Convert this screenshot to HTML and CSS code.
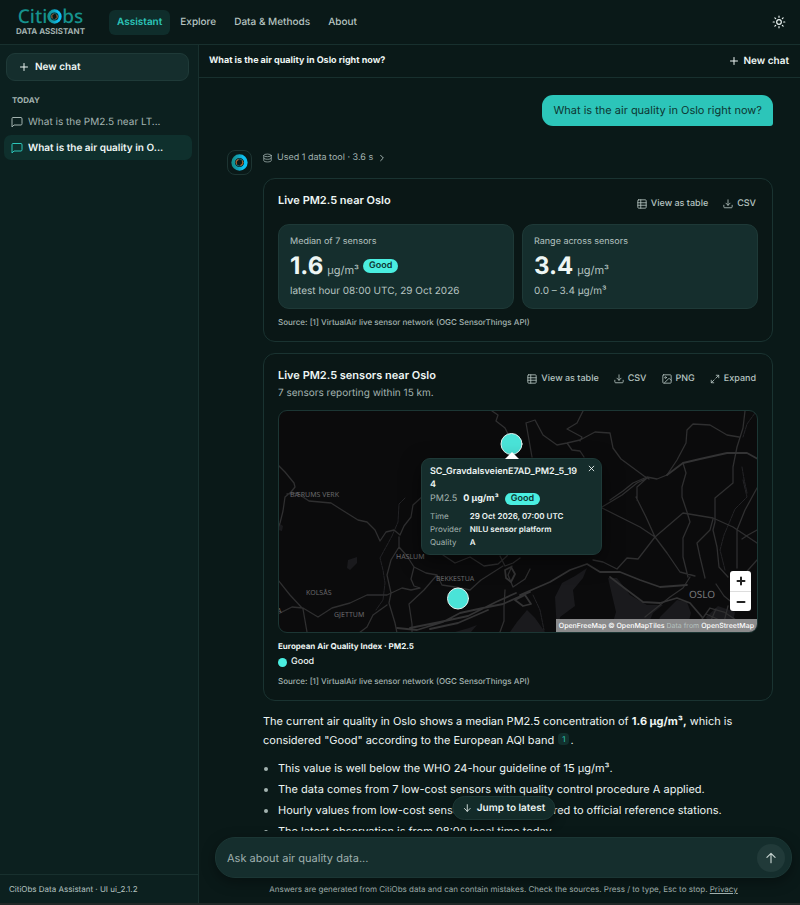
FILE: index.html
```html
<!DOCTYPE html>
<html lang="en">
<head>
<meta charset="utf-8">
<meta name="viewport" content="width=device-width, initial-scale=1">
<title>CitiObs Data Assistant</title>
<link rel="stylesheet" href="styles.css">
</head>
<body>
<svg class="defs" aria-hidden="true">
  <linearGradient id="ring" x1="0" y1="0" x2="1" y2="0"><stop offset="0" stop-color="#12908f"/><stop offset=".45" stop-color="#12a4bd"/><stop offset=".8" stop-color="#0cc0f2"/></linearGradient>
  <symbol id="i-ring" viewBox="0 0 24 24"><circle cx="12" cy="12" r="9" fill="#0c1715" stroke="url(#ring)" stroke-width="5"/><circle cx="12" cy="12" r="5" fill="none" stroke="#1d6b70" stroke-width="1.4"/><path d="M8 14a4.500 4.500 0 0 1 2-6M14 16a4.500 4.500 0 0 0 2-6" fill="none" stroke="#b35a26" stroke-width="1.500"/></symbol>
  <symbol id="i-plus" viewBox="0 0 24 24"><path d="M5 12h14M12 5v14"/></symbol>
  <symbol id="i-chat" viewBox="0 0 24 24"><path d="M22 16a2 2 0 0 1-2 2H6l-4 4V5a2 2 0 0 1 2-2h16a2 2 0 0 1 2 2z"/></symbol>
  <symbol id="i-sun" viewBox="0 0 24 24"><circle cx="12" cy="12" r="4"/><path d="M12 2v2M12 20v2M4.900 4.900l1.400 1.400M17.700 17.700l1.400 1.400M2 12h2M20 12h2M6.300 17.700l-1.400 1.400M19.100 4.900l-1.400 1.400"/></symbol>
  <symbol id="i-db" viewBox="0 0 24 24"><ellipse cx="12" cy="5" rx="10" ry="3.500"/><path d="M2 5v14c0 2 4.500 3.500 10 3.500s10-1.500 10-3.500V5M2 12c0 2 4.500 3.500 10 3.500s10-1.500 10-3.500"/></symbol>
  <symbol id="i-right" viewBox="0 0 24 24"><path d="m8 4 8 8-8 8"/></symbol>
  <symbol id="i-table" viewBox="0 0 24 24"><rect x="2" y="2" width="20" height="20" rx="2"/><path d="M2 9h20M2 15h20M9 2v20"/></symbol>
  <symbol id="i-down" viewBox="0 0 24 24"><path d="M22 15v4a2 2 0 0 1-2 2H4a2 2 0 0 1-2-2v-4M7 10l5 5 5-5M12 15V2"/></symbol>
  <symbol id="i-image" viewBox="0 0 24 24"><rect x="2" y="2" width="20" height="20" rx="2"/><circle cx="8.500" cy="8.500" r="2"/><path d="m22 15-3.500-3.500a2 2 0 0 0-2.800 0L6 21"/></symbol>
  <symbol id="i-expand" viewBox="0 0 24 24"><path d="M15 3h6v6M9 21H3v-6M21 3l-7 7M3 21l7-7"/></symbol>
  <symbol id="i-arrow" viewBox="0 0 24 24"><path d="M12 20V4M5 11l7-7 7 7"/></symbol>
  <symbol id="i-arrow-down" viewBox="0 0 24 24"><path d="M12 4v16M5 13l7 7 7-7"/></symbol>
  <symbol id="i-close" viewBox="0 0 24 24"><path d="M4 4l16 16M20 4 4 20"/></symbol>
</svg>

<header class="topbar">
  <a class="brand" href="#" aria-label="CitiObs Data Assistant">
    <span class="brand-name">Citi<svg class="brand-ring"><use href="#i-ring"/></svg>bs</span>
    <span class="brand-sub">DATA ASSISTANT</span>
  </a>
  <nav class="nav">
    <a class="nav-link active" href="#">Assistant</a>
    <a class="nav-link" href="#">Explore</a>
    <a class="nav-link" href="#">Data &amp; Methods</a>
    <a class="nav-link" href="#">About</a>
  </nav>
  <button class="theme" aria-label="Toggle theme"><svg class="icon"><use href="#i-sun"/></svg></button>
</header>

<div class="layout">
  <aside class="sidebar">
    <button class="new-chat"><svg class="icon"><use href="#i-plus"/></svg>New chat</button>
    <h2 class="group">TODAY</h2>
    <a class="thread" href="#"><svg class="icon"><use href="#i-chat"/></svg>What is the PM2.5 near LT...</a>
    <a class="thread current" href="#"><svg class="icon"><use href="#i-chat"/></svg>What is the air quality in O...</a>
    <footer class="version">CitiObs Data Assistant · UI ui_2.1.2</footer>
  </aside>

  <main class="main">
    <div class="chat-head">
      <h1 class="chat-title">What is the air quality in Oslo right now?</h1>
      <button class="head-new"><svg class="icon"><use href="#i-plus"/></svg>New chat</button>
    </div>

    <div class="stream">
      <p class="bubble">What is the air quality in Oslo right now?</p>
      <div class="reply">
        <div class="avatar"><svg><use href="#i-ring"/></svg></div>
        <div class="answer">
          <button class="tool"><svg class="icon"><use href="#i-db"/></svg>Used 1 data tool · 3.6 s<svg class="chev"><use href="#i-right"/></svg></button>

          <section class="card">
            <div class="card-head">
              <h3 class="card-title">Live PM2.5 near Oslo</h3>
              <div class="actions">
                <button class="action"><svg class="icon"><use href="#i-table"/></svg>View as table</button>
                <button class="action"><svg class="icon"><use href="#i-down"/></svg>CSV</button>
              </div>
            </div>
            <div class="tiles">
              <div class="tile">
                <div class="tile-label">Median of 7 sensors</div>
                <div class="tile-value"><strong>1.6</strong><span class="unit">µg/m³</span><span class="badge">Good</span></div>
                <div class="tile-note">latest hour 08:00 UTC, 29 Oct 2026</div>
              </div>
              <div class="tile">
                <div class="tile-label">Range across sensors</div>
                <div class="tile-value"><strong>3.4</strong><span class="unit">µg/m³</span></div>
                <div class="tile-note">0.0 – 3.4 µg/m³</div>
              </div>
            </div>
            <p class="source">Source: [1] VirtualAir live sensor network (OGC SensorThings API)</p>
          </section>

          <section class="card">
            <div class="card-head">
              <div>
                <h3 class="card-title">Live PM2.5 sensors near Oslo</h3>
                <p class="card-sub">7 sensors reporting within 15 km.</p>
              </div>
              <div class="actions">
                <button class="action"><svg class="icon"><use href="#i-table"/></svg>View as table</button>
                <button class="action"><svg class="icon"><use href="#i-down"/></svg>CSV</button>
                <button class="action"><svg class="icon"><use href="#i-image"/></svg>PNG</button>
                <button class="action"><svg class="icon"><use href="#i-expand"/></svg>Expand</button>
              </div>
            </div>
            <div class="map">
              <svg class="map-canvas" viewBox="278 411 480 221" preserveAspectRatio="xMidYMid slice" role="img" aria-label="Sensor map of Oslo">
                <g class="water">
                  <path d="M557 632L555 597 562 583 575 576 587 568 583 578 573 590 575 606 560 617 559 632z"/>
                  <path d="M608 578L617 578 630 595 647 605 663 605 653 613 645 632 610 632 616 612z"/>
                  <path d="M677 600L687 602 691 613 686 632 655 632 660 617z"/>
                  <path d="M510 632L517 622 527 610 535 618 545 632zM455 632l14-4 8-3-6 7z"/>
                  <path d="M348 560l9-3v6l-7 7-3-2zM279 523l4 3-1 5-4-1z"/>
                  <path d="M706 617l12-11 17 6-4 20h-20z"/>
                </g>
                <g class="streams">
                  <path d="M405 498l-6 6-1 18-6 14-12 22 3 12 2 13-2 17-7 10M743 480l4 17-12 12-5 12-6 14-4 15 5 20M755 413l-8 11-4 13M742 467l2 12 3 14M533 595l7 15 4 20"/>
                </g>
                <g class="roads">
                  <path d="M492 411l6 4-2 6 9 7 3 6M278 465l7 7 9 11 1 4-4 5-6 5-2 14-3 12-2 5M287 494l10-1 12 8 22 2 11 7 16 10 9 2 8 8 5 11 6-9 8-2 6 5 4-9 7-9 2-12 10-9 20-10"/>
                  <path d="M399 537v10l-8 13-4 15 4 18-2 10 6 20 2 10M399 547l8 9 7 11 12 6 11 2 5 10 13 2 15 3 11-10 22-14M414 567l-3 12 3 7 6 2-9 2-9-2-15 7h-20l-17 8-18 5-14 9-15-9-11-1-14 7M278 580l12 15 13 14 4 23M387 605l-14 10-6 12-8 6M437 575l-13 15-15 14 3 20v8"/>
                  <path d="M443 555l12 8 15-6 14 9 14-2 9-8 4-12M500 556l5 10 8-3 7-5M512 566l-4 9 5 12 12-8 5-10M505 590l-1 17 0 14-4 11"/>
                  <path d="M526 423l9-3 8 15 14 10 10-2 13-3 15-8 15 1 3 15 8 11 23 17 5 3M526 423l6 34M567 443l5 7 8 1 4 6M583 411l-6 12-10 6 15 8-2 4M610 500l13-9 10-8 14-6 10 2 10-4 10-15 9-17 1-13 6-6 17 1 17 10 12 2M745 411l-2 17-6 19-4 20v16l-18 15v24l-2 8 4 17 2 20 9 10"/>
                  <path d="M602 508l18 9 20 10 15 10 12 16 13 19 15 4M602 507l20-12 15-12 10-5M637 500v-13l10-9M636 497l10 20 9 20M683 463l3 10-4 14v10l5 15 3 10-7 16v19l5 20M713 519l-3 11-13 13 3 14 5 21"/>
                  <path d="M655 537l28-24 30 5 20 9 24 16M593 560l10 2 14 7 10-11 11 1 17-22M757 488l-12 22-8 20v38M757 530l-9 5-6 4M757 560l-16 18"/>
                  <path d="M690 577l-7 11-13 9-25 20M716 584l8 12 10 8M700 622l10-14 14 4 12 8M706 614l18 8M716 609l-8 18M728 606l-5 20"/>
                </g>
                <g class="roads major">
                  <path d="M520 595l30-13 20-12 17-6 13 8 20 0 20 8 20 7 27-2M610 577l17 13 16 12 17 1 17-5 13 5 12 14M667 475l16-12 17-4 27-6h20l11 6M397 628l20 2 26-8 17-9 23-5 20-4 27-12M410 628l30-6 28-6 28-14 20-9M430 629l28-6 30-13"/>
                  <path d="M505 570l6-3 4 7-4 8-5-4zM515 600l8 6 8-2-6-9z"/>
                </g>
                <g class="places">
                  <text x="290" y="497">BÆRUMS VERK</text>
                  <text x="396" y="559">HASLUM</text>
                  <text x="436" y="581">BEKKESTUA</text>
                  <text x="306" y="595">KOLSÅS</text>
                  <text x="334" y="617">GJETTUM</text>
                  <text x="277" y="613">A</text>
                  <text class="city" x="689" y="598">OSLO</text>
                </g>
                <g class="sensors"><circle cx="511.500" cy="444" r="10.500"/><circle cx="458" cy="598.500" r="10.500"/></g>
              </svg>
              <div class="popup">
                <button class="popup-close" aria-label="Close popup"><svg><use href="#i-close"/></svg></button>
                <h4 class="popup-title">SC_GravdalsveienE7AD_PM2_5_194</h4>
                <p class="popup-value"><span>PM2.5</span><strong>0 µg/m³</strong><span class="badge small">Good</span></p>
                <dl class="facts">
                  <dt>Time</dt><dd>29 Oct 2026, 07:00 UTC</dd>
                  <dt>Provider</dt><dd>NILU sensor platform</dd>
                  <dt>Quality</dt><dd>A</dd>
                </dl>
              </div>
              <div class="zoom">
                <button aria-label="Zoom in"><svg><use href="#i-plus"/></svg></button>
                <button aria-label="Zoom out"><svg viewBox="0 0 24 24"><path d="M5 12h14"/></svg></button>
              </div>
              <div class="credit"><a href="#">OpenFreeMap</a> <a href="#">© OpenMapTiles</a> Data from <a href="#">OpenStreetMap</a></div>
            </div>
            <p class="legend-title">European Air Quality Index · PM2.5</p>
            <p class="legend"><span class="dot"></span>Good</p>
            <p class="source">Source: [1] VirtualAir live sensor network (OGC SensorThings API)</p>
          </section>

          <p class="prose">The current air quality in Oslo shows a median PM2.5 concentration of <strong>1.6 µg/m³,</strong> which is considered "Good" according to the European AQI band <a class="cite" href="#">1</a>.</p>
          <ul class="points">
            <li>This value is well below the WHO 24-hour guideline of 15 µg/m³.</li>
            <li>The data comes from 7 low-cost sensors with quality control procedure A applied.</li>
            <li>Hourly values from low-cost sensors can't be compared to official reference stations.</li>
            <li>The latest observation is from 08:00 local time today.</li>
          </ul>
        </div>
      </div>
    </div>

    <div class="dock">
      <form class="composer">
        <button class="jump" type="button"><svg class="icon"><use href="#i-arrow-down"/></svg>Jump to latest</button>
        <input type="text" aria-label="Ask about air quality data" placeholder="Ask about air quality data...">
        <button class="send" type="button" aria-label="Send"><svg class="icon"><use href="#i-arrow"/></svg></button>
      </form>
      <p class="hint">Answers are generated from CitiObs data and can contain mistakes. Check the sources. Press / to type, Esc to stop. <a href="#">Privacy</a></p>
    </div>
  </main>
</div>
</body>
</html>
```
FILE: styles.css
```css
:root {
  --bg: #0a1918;
  --side: #0c201f;
  --panel: #152e2d;
  --line: #18302e;
  --text: #eef6f4;
  --muted: #a3b3b0;
  --teal: #2cc5b9;
  --good: #4aeee0;
}

* { box-sizing: border-box; margin: 0; padding: 0; }

body {
  height: 100vh;
  display: flex;
  flex-direction: column;
  background: var(--bg);
  color: var(--text);
  font: 11px/16px Inter, "Liberation Sans", sans-serif;
  text-rendering: geometricPrecision;
  overflow: hidden;
  border-bottom: 2px solid #202827;
}

button, input { font: inherit; color: inherit; background: none; border: 0; text-rendering: inherit; }
button { cursor: pointer; }
a { color: inherit; text-decoration: none; }
svg { flex: none; fill: none; stroke: currentColor; stroke-width: 2; stroke-linecap: round; stroke-linejoin: round; }
.defs { position: absolute; width: 0; height: 0; }
.icon { width: 12px; height: 12px; }

/* Top bar */
.topbar { display: flex; align-items: center; height: 45px; flex: none; padding: 0 14px; border-bottom: 1px solid var(--line); }
.brand { width: 73px; margin-right: 22px; display: flex; flex-direction: column; align-items: center; }
.brand-name { display: flex; align-items: center; font: 500 19px/18px "Noto Sans", sans-serif; color: #16928d; }
.brand-ring { width: 15px; height: 15px; stroke: none; }
.brand-sub { font-size: 8px; line-height: 12px; font-weight: 700; color: var(--muted); white-space: nowrap; }
.nav { display: flex; gap: 2px; }
.nav-link { padding: 4px 8px; font-size: 10px; line-height: 17px; border-radius: 6px; font-weight: 500; color: #b6c4c1; }
.nav-link.active { background: #0f2d2b; color: var(--teal); font-weight: 600; }
.theme { margin-left: auto; display: flex; }
.theme .icon { width: 14px; height: 14px; }

.layout { display: flex; flex: 1; min-height: 0; }

/* Sidebar */
.sidebar { width: 199px; flex: none; display: flex; flex-direction: column; padding: 8px 6px 0 4px; background: var(--side); border-right: 1px solid var(--line); }
.new-chat { display: flex; align-items: center; gap: 5px; height: 28px; margin: 0 3px 0 2px; padding: 0 11px; background: var(--panel); border: 1px solid #1f3a38; border-radius: 9px; font-size: 10px; font-weight: 600; }
.group { margin: 12px 8px 2px; font-size: 8px; line-height: 14px; font-weight: 700; color: var(--muted); }
.thread { display: flex; align-items: center; gap: 5px; height: 25px; margin-bottom: 1px; padding: 0 7px; border-radius: 7px; font-size: 10px; color: var(--muted); }
.thread.current { background: #0f302d; color: var(--text); font-weight: 600; }
.thread.current .icon { color: var(--teal); }
.version { margin: auto -6px 0 -4px; padding: 6px 9px 6px; border-top: 1px solid var(--line); font-size: 8px; color: #b6c4c1; }

/* Conversation */
.main { flex: 1; min-width: 0; display: flex; flex-direction: column; }
.chat-head { display: flex; align-items: center; justify-content: space-between; height: 33px; flex: none; padding: 0 11px 0 10px; border-bottom: 1px solid var(--line); }
.chat-title { font-size: 9px; font-weight: 700; }
.head-new { display: flex; align-items: center; gap: 4px; font-size: 10px; font-weight: 600; }
.stream { flex: 1; min-height: 0; overflow: hidden; padding: 17px 27px 0 28px; }
.bubble { width: fit-content; margin-left: auto; padding: 7px 11px 8px; background: var(--teal); color: #0c3531; border-radius: 11px 11px 3px 11px; }
.reply { display: flex; gap: 11px; margin-top: 24px; }
.avatar { display: grid; place-items: center; width: 25px; height: 25px; flex: none; border: 1px solid #1d3432; border-radius: 8px; }
.avatar svg { width: 17px; height: 17px; stroke: none; }
.answer { flex: 1; min-width: 0; }
.tool { display: flex; align-items: center; gap: 5px; font-size: 9px; color: var(--muted); margin-bottom: 12px; }
.tool .icon { width: 9px; height: 10px; }
.tool .chev { width: 8px; height: 8px; stroke-width: 3; }

.card { padding: 12px 14px; margin-bottom: 11px; border: 1px solid #1a3331; border-radius: 12px; background: #0a1716; }
.card-head { display: flex; justify-content: space-between; align-items: flex-start; margin-bottom: 8px; }
.card-title { font-size: 11px; line-height: 18px; font-weight: 600; }
.card-sub { font-size: 10px; line-height: 18px; color: var(--muted); }
.actions { display: flex; gap: 15px; padding-right: 2px; }
.action { display: flex; align-items: center; gap: 4px; height: 25px; font-size: 9px; font-weight: 500; color: #b6c4c1; }
.action .icon { width: 10px; height: 10px; }

.tiles { display: grid; grid-template-columns: 1fr 1fr; gap: 8px; margin-bottom: 6px; }
.tile { padding: 10px 11px 9px; background: var(--panel); border: 1px solid #1e3937; border-radius: 11px; }
.tile-label { font-size: 9px; line-height: 14px; color: #b6c4c1; }
.tile-value { display: flex; align-items: baseline; height: 34px; }
.tile-value strong { font-size: 24px; line-height: 34px; font-weight: 700; }
.unit { margin: 0 4px; font-size: 11px; color: #b6c4c1; }
.tile-note { font-size: 10px; color: #b6c4c1; }
.badge { padding: 0 6px; line-height: 14px; border-radius: 7px; background: var(--good); color: #0c3531; font-size: 9px; font-weight: 600; align-self: center; }
.badge.small { line-height: 12px; }
.source { font-size: 8px; line-height: 14px; font-weight: 500; color: var(--muted); }

/* Map */
.map { position: relative; height: 223px; margin-bottom: 6px; border: 1px solid #1c3634; border-radius: 9px; overflow: hidden; background: #0b0b0c; }
.map-canvas { display: block; width: 100%; height: 100%; }
.water { fill: #1a1a1d; stroke: none; }
.streams { stroke: #242427; stroke-width: 1; stroke-dasharray: 4 1; }
.roads { stroke: #2f2f30; stroke-width: 1.3; }
.roads.major { stroke: #333334; stroke-width: 1.8; }
.places { fill: #68686a; stroke: none; font: 7px "Noto Sans", sans-serif; }
.city { font-size: 10px; fill: #77777a; }
.sensors { fill: #4ae3d8; stroke: #e4f3f1; stroke-width: 1; }

.popup { position: absolute; left: 142px; top: 47px; width: 181px; padding: 6px 8px 5px; background: #152d2c; border: 1px solid #1f3a38; border-radius: 9px; box-shadow: 0 6px 20px rgba(0, 0, 0, .5); }
.popup::before { content: ""; position: absolute; left: 83px; top: -7px; border: 7px solid transparent; border-top: 0; border-bottom-color: #fff; }
.popup-close { position: absolute; right: 6px; top: 6px; display: flex; padding: 0; }
.popup-close svg { width: 7px; height: 7px; stroke-width: 3; }
.popup-title { width: 150px; font-size: 9px; line-height: 13px; font-weight: 600; word-break: break-all; }
.popup-value { display: flex; align-items: center; gap: 6px; font-size: 9px; margin-bottom: 3px; }
.popup-value > span:first-child, .facts dt { color: var(--muted); }
.facts { display: grid; grid-template-columns: auto 1fr; column-gap: 8px; font-size: 8px; line-height: 13px; }
.facts dd { font-weight: 600; }

.zoom { position: absolute; right: 6px; bottom: 21px; width: 21px; border-radius: 3px; background: #fff; color: #222; }
.zoom button { display: grid; place-items: center; width: 100%; height: 20px; }
.zoom button + button { border-top: 1px solid #ddd; }
.zoom svg { width: 12px; height: 12px; stroke-width: 4; }
.credit { position: absolute; right: 0; bottom: 0; padding: 0 3px; line-height: 13px; font-size: 7px; background: #8b8b8c; color: #b4c0be; }
.credit a { color: #fff; font-weight: 500; }

.legend-title { font-size: 8px; line-height: 14px; font-weight: 700; margin-bottom: 2px; }
.legend { display: flex; align-items: center; gap: 4px; font-size: 9px; line-height: 14px; font-weight: 500; margin-bottom: 5px; }
.dot { width: 9px; height: 9px; border-radius: 50%; background: var(--good); }

.prose { font-size: 11px; line-height: 19px; }
.cite { display: inline-block; padding: 0 4px; margin: 0 1px; border-radius: 4px; background: #12302d; color: var(--teal); font-size: 8px; line-height: 12px; vertical-align: 2px; }
.points { display: grid; gap: 2px; margin-top: 9px; padding-left: 15px; font-size: 11px; line-height: 19px; }
.points li::marker { color: var(--muted); }

/* Composer */
.dock { flex: none; padding: 6px 8px 6px 16px; }
.composer { position: relative; display: flex; align-items: center; height: 41px; padding: 0 6px 0 11px; background: var(--panel); border: 1px solid #1b3634; border-radius: 20px; box-shadow: 0 4px 14px rgba(0, 0, 0, .35); }
.composer input { flex: 1; min-width: 0; outline: 0; }
.composer input::placeholder { color: #9fb0ad; opacity: 1; }
.jump { position: absolute; left: 50%; top: -42px; transform: translateX(-50%); display: flex; align-items: center; gap: 5px; height: 24px; padding: 0 9px; border: 1px solid #1c3634; border-radius: 12px; background: #132b29; font-size: 10px; font-weight: 600; white-space: nowrap; box-shadow: 0 4px 12px rgba(0, 0, 0, .4); }
.jump .icon { width: 10px; height: 10px; }
.send { display: grid; place-items: center; width: 28px; height: 28px; border-radius: 50%; background: #213a39; color: #c5d2cf; }
.send .icon { width: 14px; height: 14px; }
.hint { margin-top: 3px; text-align: center; font-size: 8px; color: var(--muted); }
.hint a { text-decoration: underline; }
```
